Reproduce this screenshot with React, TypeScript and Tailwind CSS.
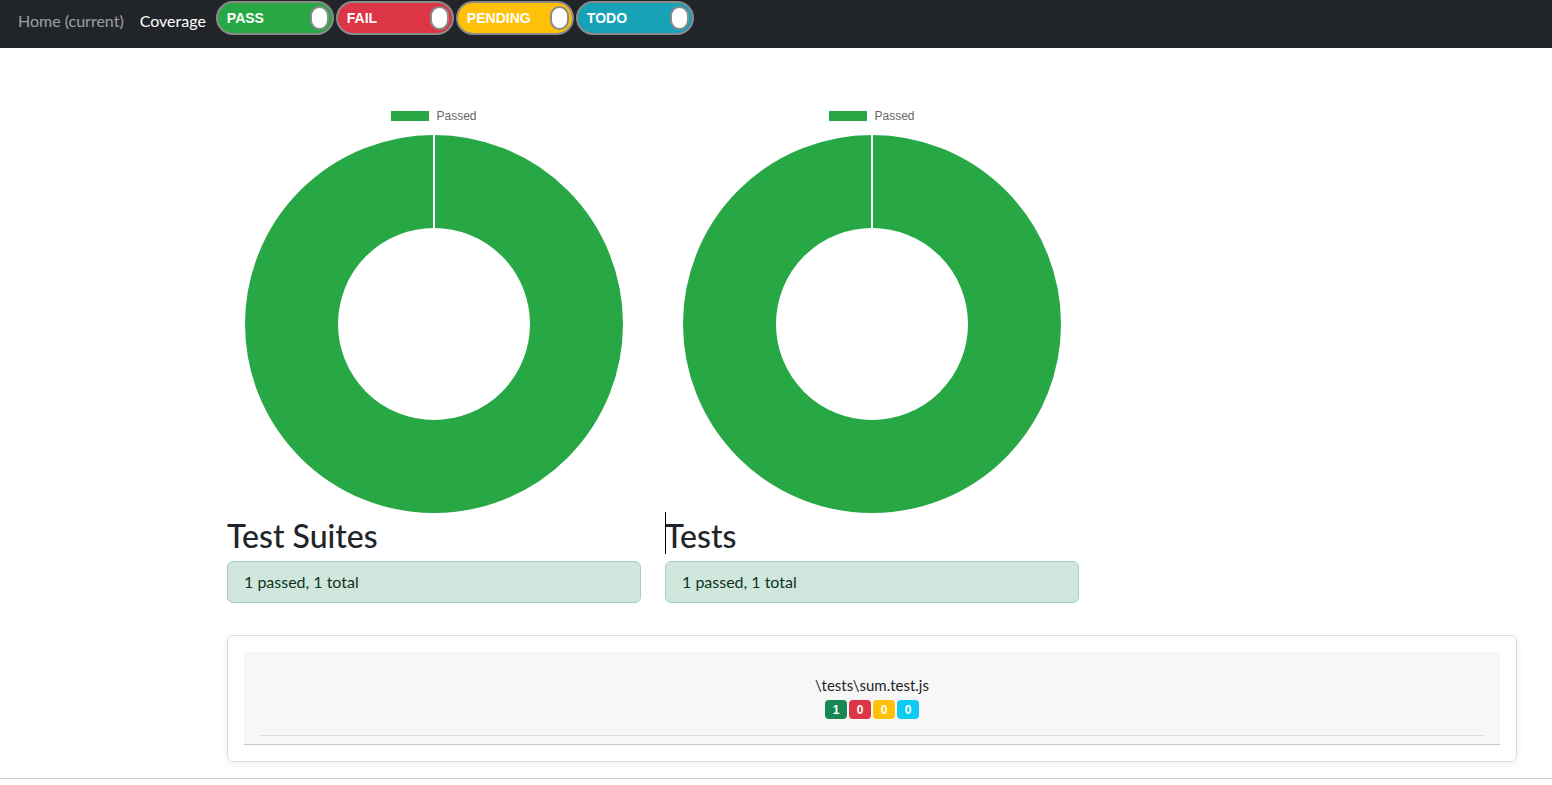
import React from 'react'

const TOGGLES = [
  { label: 'PASS', bg: 'bg-[#28a745]' },
  { label: 'FAIL', bg: 'bg-[#dc3545]' },
  { label: 'PENDING', bg: 'bg-[#ffc107]' },
  { label: 'TODO', bg: 'bg-[#17a2b8]' },
]

const BADGES = [
  { n: 1, bg: 'bg-[#198754]' },
  { n: 0, bg: 'bg-[#dc3545]' },
  { n: 0, bg: 'bg-[#ffc107]' },
  { n: 0, bg: 'bg-[#0dcaf0]' },
]

function Toggle({ label, bg }: { label: string; bg: string }) {
  return (
    <div
      className={`flex items-center justify-between w-[118px] h-[34px] rounded-full border-2 border-[#8a8a8a] pl-[9px] pr-[3px] ${bg}`}
    >
      <span className="text-white font-bold text-[14px] font-['Liberation_Sans',Arial,sans-serif]">
        {label}
      </span>
      <span className="w-[19px] h-[24px] rounded-full bg-white border-2 border-[#8a8a8a]" />
    </div>
  )
}

/** Donut al 100% — un solo segmento verde con la costura blanca arriba */
function Donut() {
  return (
    <div className="h-[414px] flex flex-col items-center">
      <div className="flex items-center gap-[7px] pt-[11px] h-[34px] items-start">
        <span className="w-[38px] h-[10px] bg-[#28a745]" />
        <span className="text-[12px] leading-[10px] text-[#666] font-['Liberation_Sans',Arial,sans-serif]">
          Passed
        </span>
      </div>
      <svg width="414" height="380" viewBox="0 0 414 380">
        <circle cx="207" cy="190" r="142.5" fill="none" stroke="#28a745" strokeWidth="93" />
        <line x1="207" y1="0" x2="207" y2="95" stroke="#ffffff" strokeWidth="2" />
      </svg>
    </div>
  )
}

function StatCol({ title, text, caret }: { title: string; text: string; caret?: boolean }) {
  return (
    <div className="w-[414px]">
      <Donut />
      <div className="relative">
        {caret && <span className="absolute left-0 top-[-2px] w-px h-[42px] bg-black" />}
        <h2 className="text-[32px] pt-[4px] leading-[35px] font-medium text-[#212529] mb-2">{title}</h2>
      </div>
      <div className="bg-[#d1e7dd] border border-[#a3cfbb] rounded-md px-4 py-2 text-[16px] leading-6 text-[#0a3622]">
        {text}
      </div>
    </div>
  )
}

export default function App() {
  return (
    <div className="min-h-[785px] bg-white font-['Lato','Segoe_UI',sans-serif] text-[#212529]">
      {/* Barra de navegación */}
      <nav className="h-[48px] bg-[#212529] flex items-start pl-[18px]">
        <div className="flex items-center h-[42px] gap-4 text-[16px]">
          <span className="text-white/55">Home (current)</span>
          <span className="text-white">Coverage</span>
        </div>
        <div className="flex gap-[2px] ml-[10px] mt-px">
          {TOGGLES.map((t) => (
            <Toggle key={t.label} label={t.label} bg={t.bg} />
          ))}
        </div>
      </nav>

      <main className="ml-[227px] w-[1290px] pt-[52px]">
        <div className="flex gap-6">
          <StatCol title="Test Suites" text="1 passed, 1 total" />
          <StatCol title="Tests" text="1 passed, 1 total" caret />
        </div>

        <div className="mt-8 border border-[#dcdcdc] rounded-md p-4 shadow-[0_2px_8px_rgba(0,0,0,0.06)]">
          <div className="bg-[#f7f7f7] rounded-t-md border-b border-[#c8c8c8] px-4 pt-[21px] pb-2">
            <div className="flex flex-col items-center">
              <span className="text-[15px] leading-6 text-[#212529]">\tests\sum.test.js</span>
              <div className="flex gap-[2px] mt-[3px]">
                {BADGES.map((b, i) => (
                  <span
                    key={i}
                    className={`w-[22px] h-[19px] rounded-[4px] flex items-center justify-center text-white font-bold text-[12px] font-['Liberation_Sans',Arial,sans-serif] ${b.bg}`}
                  >
                    {b.n}
                  </span>
                ))}
              </div>
            </div>
            <div className="mt-4 border-t border-[#dedede]" />
          </div>
        </div>
      </main>

      <footer className="mt-4 border-t border-[#c8c8c8]" />
    </div>
  )
}
